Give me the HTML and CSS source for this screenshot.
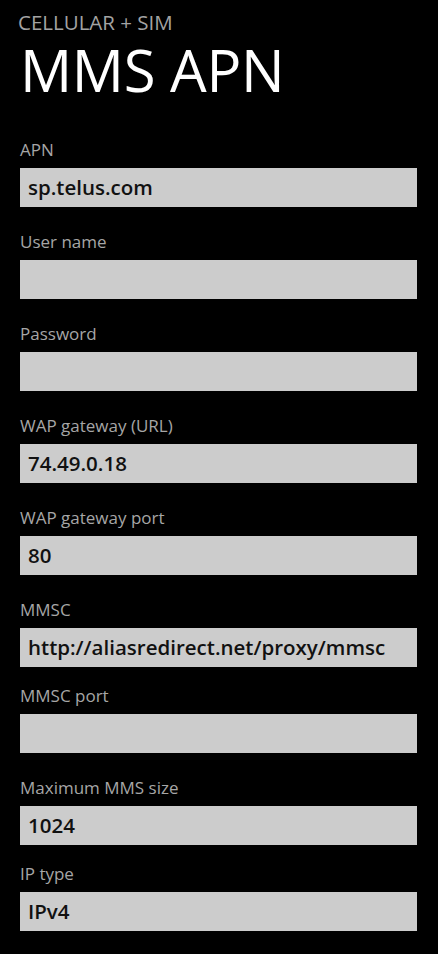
FILE: index.html
```html
<!DOCTYPE html>
<html lang="en">

<head>
    <meta charset="UTF-8">
    <meta name="viewport" content="width=device-width, initial-scale=1.0">
    <title>MMS APN</title>
    <link rel="stylesheet" href="styles.css">
</head>

<body>
    <div class="page">
        <div class="header">
            <p class="app-title">CELLULAR + SIM</p>
            <h1 class="page-title">MMS APN</h1>
        </div>

        <div class="form">
            <div class="field">
                <label class="field-label">APN</label>
                <div class="field-box">sp.telus.com</div>
            </div>
            <div class="field">
                <label class="field-label">User name</label>
                <div class="field-box"></div>
            </div>
            <div class="field">
                <label class="field-label">Password</label>
                <div class="field-box"></div>
            </div>
            <div class="field">
                <label class="field-label">WAP gateway (URL)</label>
                <div class="field-box">74.49.0.18</div>
            </div>
            <div class="field">
                <label class="field-label">WAP gateway port</label>
                <div class="field-box">80</div>
            </div>
            <div class="field">
                <label class="field-label">MMSC</label>
                <div class="field-box">http://aliasredirect.net/proxy/mmsc</div>
            </div>
            <div class="field short">
                <label class="field-label">MMSC port</label>
                <div class="field-box"></div>
            </div>
            <div class="field">
                <label class="field-label">Maximum MMS size</label>
                <div class="field-box">1024</div>
            </div>
            <div class="field short">
                <label class="field-label">IP type</label>
                <div class="field-box">IPv4</div>
            </div>
        </div>
    </div>
</body>

</html>
```

FILE: styles.css
```css
* {
    margin: 0;
    padding: 0;
    box-sizing: border-box;
}

html,
body {
    height: 100%;
}

body {
    background: #000;
    color: #fff;
    font-family: "Open Sans", "Noto Sans", sans-serif;
    overflow: hidden;
}

.page {
    padding: 10px 21px 0 20px;
}

.header {
    display: flex;
    flex-direction: column;
}

.app-title {
    font-size: 20.5px;
    line-height: 24px;
    color: #a3a3a3;
    margin-left: -2px;
}

.page-title {
    font-size: 58px;
    line-height: 60px;
    font-weight: 400;
    margin-top: 6px;
    letter-spacing: -0.3px;
}

.form {
    display: flex;
    flex-direction: column;
    margin-top: 40px;
}

.field {
    display: flex;
    flex-direction: column;
    gap: 8px;
}

.field + .field {
    margin-top: 25px;
}

/* 这两项比别的间距小一点 */
.field.short {
    margin-top: 19px !important;
}

.field-label {
    font-size: 17px;
    line-height: 20px;
    color: #a6a6a6;
}

.field-box {
    height: 39px;
    background: #cccccc;
    color: #111;
    font-size: 20.5px;
    font-weight: 600;
    line-height: 39px;
    padding-left: 8px;
    white-space: nowrap;
    overflow: hidden;
}
```
